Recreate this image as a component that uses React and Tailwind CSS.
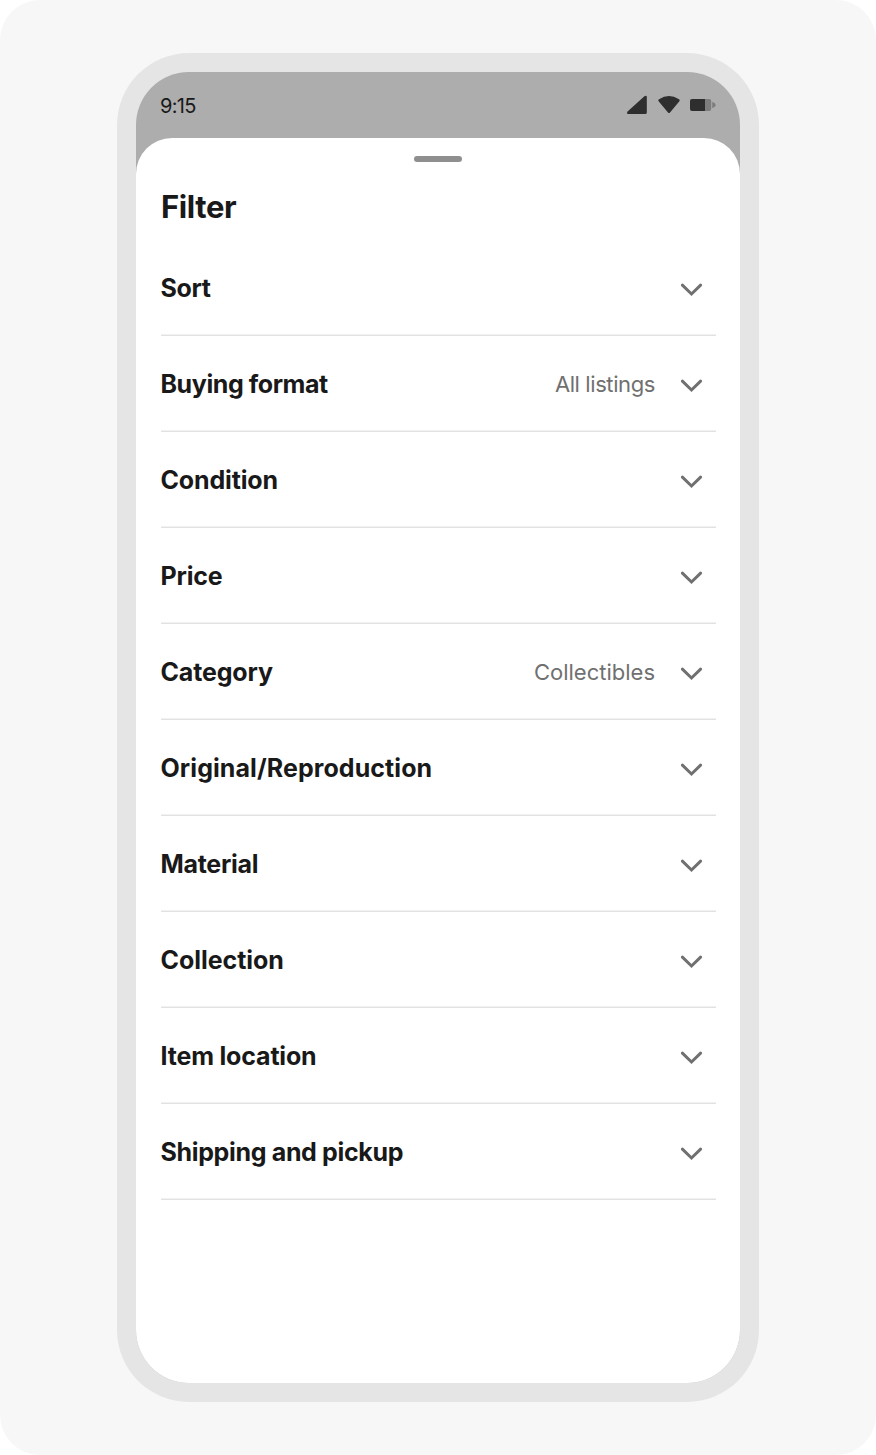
import React from 'react';

const filters = [
  { name: 'Sort', tracking: 'tracking-[-0.4px]' },
  { name: 'Buying format', value: 'All listings', tracking: 'tracking-[-0.42px]', valueTracking: 'tracking-[-0.4px]' },
  { name: 'Condition', tracking: 'tracking-[-0.15px]' },
  { name: 'Price', tracking: 'tracking-[-0.2px]' },
  { name: 'Category', value: 'Collectibles', tracking: 'tracking-[-0.15px]', valueTracking: 'tracking-[0px]' },
  { name: 'Original/Reproduction', tracking: 'tracking-[0.08px]' },
  { name: 'Material', tracking: 'tracking-[-0.3px]' },
  { name: 'Collection', tracking: 'tracking-[-0.05px]' },
  { name: 'Item location', tracking: 'tracking-[-0.18px]' },
  { name: 'Shipping and pickup', tracking: 'tracking-[-0.34px]' },
];

const ChevronIcon = () => (
  <svg className="h-6 w-6 shrink-0" viewBox="0 0 24 24" fill="none" stroke="#707070" strokeWidth="3" strokeLinecap="round" strokeLinejoin="miter">
    <path d="M2.4 9.1 11.5 18 20.6 9.1" />
  </svg>
);

// signal, wifi and battery
const StatusIcons = () => (
  <svg className="h-5 w-[90px]" viewBox="0 0 90 20" fill="#2e2e2e">
    <path d="M1.6 16.6 18.4 1.2Q20.8 0 20.8 2V17.4Q20.8 19 19.2 19H2Q.2 19 1.6 16.6Z" />
    <path d="M33 4.2Q43-2.4 53 4.2 54.3 5.1 53.2 6.4L44 17.4Q43 18.6 42 17.4L32.8 6.4Q31.7 5.1 33 4.2Z" />
    <path d="M79 4h4.2a2 2 0 0 1 2 2v8a2 2 0 0 1-2 2H79ZM86.2 7q3.4 1 3.4 3t-3.4 3Z" fill="#7d7d7d" />
    <path d="M66 4h13v12H66a2 2 0 0 1-2-2V6a2 2 0 0 1 2-2Z" />
  </svg>
);

const FilterRow = ({ filter }) => (
  <li className="flex h-24 items-center border-b border-[#e2e2e2] pr-3 shadow-[inset_0_-1px_0_#f1f1f1]">
    <span className={`flex-1 text-[25px] leading-8 font-bold text-[#191919] ${filter.tracking}`}>{filter.name}</span>
    {filter.value && (
      <span className={`mr-[25px] text-[22px] leading-8 text-[#707070] ${filter.valueTracking}`}>{filter.value}</span>
    )}
    <ChevronIcon />
  </li>
);

const App = () => {
  return (
    <div className="flex h-[1455px] w-[876px] justify-center rounded-[40px] bg-[#f7f7f7] pt-[53px] font-['Inter',sans-serif]">
      <div className="h-[1349px] w-[642px] rounded-[72px] bg-[#e5e5e5] p-[19px]">
        <div className="flex h-full flex-col overflow-hidden rounded-[53px] bg-[#adadad]">
          <header className="flex h-[66px] shrink-0 items-center justify-between pr-6 pl-6">
            <span className="pt-px text-[20px] tracking-[-0.7px] text-[#191919]">9:15</span>
            <StatusIcons />
          </header>
          <main className="flex-1 rounded-t-[36px] bg-white px-6 pt-[18px]">
            <div className="mx-auto h-1.5 w-12 rounded-full bg-[#8f8f8f]" />
            <h1 className="mt-[25px] pl-px text-[31px] leading-10 font-bold tracking-[-0.4px] text-[#191919]">Filter</h1>
            <ul className="mt-[13px] pl-[0.5px]">
              {filters.map((filter) => (
                <FilterRow key={filter.name} filter={filter} />
              ))}
            </ul>
          </main>
        </div>
      </div>
    </div>
  );
};

export default App;
